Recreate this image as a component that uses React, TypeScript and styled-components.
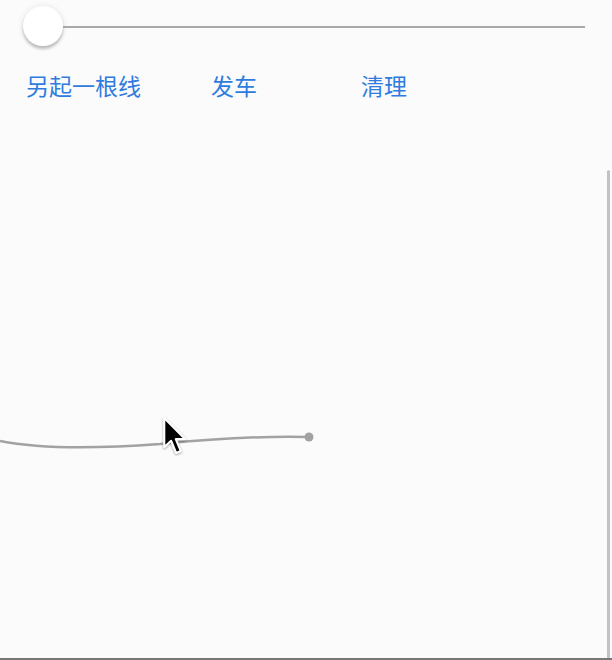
import { createGlobalStyle, styled } from "styled-components";

const GlobalStyle = createGlobalStyle`
  html, body {
    margin: 0;
    padding: 0;
    background: #fbfbfb;
    font-family: "Noto Sans CJK SC", "Noto Sans", sans-serif;
  }
`;

const Page = styled.div`
  height: 660px;
  display: flex;
  flex-direction: column;
  background: #fbfbfb;
  overflow: hidden;
`;

const SliderRow = styled.div`
  display: flex;
  align-items: center;
  padding: 6px 27px 0 23px;
  height: 40px;
`;

const Thumb = styled.div`
  width: 40px;
  height: 40px;
  border-radius: 50%;
  background: #fff;
  flex-shrink: 0;
  box-shadow: 0 3px 3px rgba(0, 0, 0, 0.22), 0 0 5px 2px rgba(0, 0, 0, 0.05);
`;

const Track = styled.div`
  flex: 1;
  height: 2px;
  margin-top: 2px;
  background: #a9a9a9;
`;

const ButtonRow = styled.div`
  display: flex;
  height: 26px;
  margin-top: 26px;
  margin-bottom: 2px;
  padding-left: 26px;
`;

const TextButton = styled.button<{ $width?: number }>`
  width: ${({ $width }) => ($width ? `${$width}px` : "auto")};
  padding: 0;
  border: none;
  background: none;
  text-align: left;
  font-family: "Noto Sans CJK SC", "Noto Sans", sans-serif;
  font-size: 23px;
  line-height: 26px;
  color: #2f7be0;
  cursor: pointer;
`;

const Canvas = styled.div`
  position: relative;
  flex: 1;
  border-bottom: 2px solid #777;
`;

const Drawing = styled.svg`
  display: block;
  width: 100%;
  height: 100%;
`;

const ScrollThumb = styled.div`
  position: absolute;
  right: 2px;
  top: 70px;
  bottom: 0;
  width: 3px;
  border-radius: 2px 2px 0 0;
  background: #c2c2c2;
`;

const Pointer = styled.svg`
  position: absolute;
  left: 161px;
  top: 316px;
  width: 26px;
  height: 43px;
  filter: drop-shadow(0 1px 1px rgba(0, 0, 0, 0.35));
`;

export default function App() {
  return (
    <Page>
      <GlobalStyle />
      <SliderRow>
        <Thumb />
        <Track />
      </SliderRow>
      <ButtonRow>
        <TextButton $width={185}>另起一根线</TextButton>
        <TextButton $width={150}>发车</TextButton>
        <TextButton>清理</TextButton>
      </ButtonRow>
      <Canvas>
        <Drawing>
          <path
            d="M0 341 C 30 347, 80 350, 160 344 C 220 338, 270 336, 309 337"
            fill="none"
            stroke="#a2a2a2"
            strokeWidth="2.5"
          />
          <circle cx="309" cy="337" r="4.5" fill="#a2a2a2" />
        </Drawing>
        <ScrollThumb />
        <Pointer viewBox="0 0 16 26">
          <path
            d="M2 1 L2 19 L6.2 15 L9.3 22.5 L12.2 21.3 L9.1 14 L14.8 14 Z"
            fill="#000"
            stroke="#fff"
            strokeWidth="1.3"
            strokeLinejoin="round"
          />
        </Pointer>
      </Canvas>
    </Page>
  );
}
